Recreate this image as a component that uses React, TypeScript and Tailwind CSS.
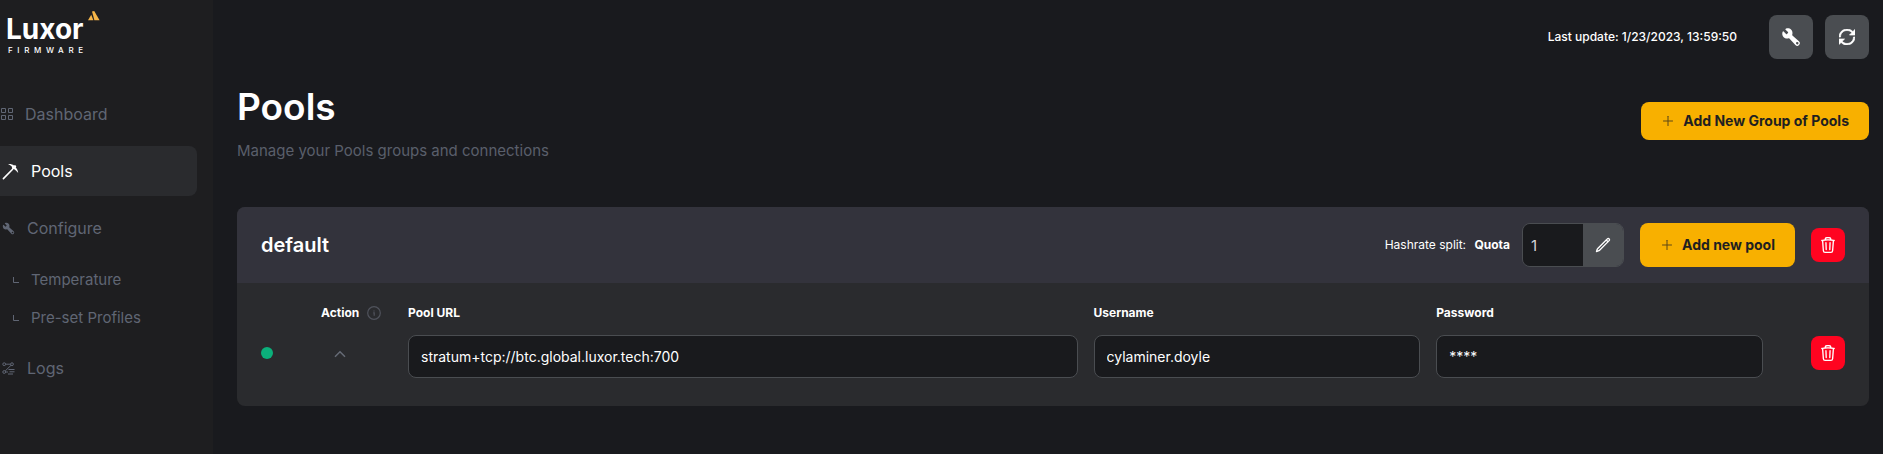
import type { ReactNode } from "react";
import { AiOutlinePlus } from "react-icons/ai";
import { HiOutlinePencil, HiOutlineTrash } from "react-icons/hi2";
import { ImLoop2 } from "react-icons/im";
import { IoBuild } from "react-icons/io5";

function Logo() {
  return (
    <a href="#home" aria-label="Luxor Firmware" className="flex items-start pl-[6px] pt-[11px]">
      <span className="flex flex-col pt-[2px]">
        <span className="text-[28px] leading-8 font-bold">Luxor</span>
        <span className="pl-[2px] text-[8px] leading-[10px] font-medium tracking-[0.58em]">FIRMWARE</span>
      </span>
      <svg width="12" height="10" viewBox="0 0 12 10" fill="#f5b548" aria-hidden="true">
        <path d="M4 0.4 L6.2 0 L11.6 9.2 L6.4 9.2 Z" />
        <path d="M3.2 3.8 L5.4 9.2 L0 9.2 Z" />
      </svg>
    </a>
  );
}

function GridIcon() {
  return (
    <svg width="14" height="14" viewBox="0 0 14 14" fill="none" stroke="currentColor" aria-hidden="true">
      <path d="M1.5 1.5h4v4h-4zM8.5 1.5h4v4h-4zM1.5 8.5h4v4h-4zM8.5 8.5h4v4h-4z" />
    </svg>
  );
}

function PickaxeIcon() {
  return (
    <svg width="17" height="17" viewBox="0 0 17 17" aria-hidden="true">
      <path d="M1.4 15.6 L10.6 6.2" stroke="currentColor" strokeWidth="1.6" strokeLinecap="round" />
      <path d="M6 1 C8.5 0.7 10.5 1.3 12 2.4 L13.1 1.9 L14.3 3.3 L13.8 4.4 C15.2 6 16 7.8 16.2 10 C14.8 8.2 13.4 6.9 11.8 6 L10.8 6.2 L9.8 5 L10.2 4.1 C9 2.8 7.6 1.8 6 1 Z" fill="currentColor" />
    </svg>
  );
}

function LogsIcon() {
  return (
    <svg width="13" height="13" viewBox="0 0 13 13" fill="none" stroke="currentColor" aria-hidden="true">
      <circle cx="2.2" cy="2.2" r="1.4" />
      <circle cx="10" cy="2.2" r="1.4" />
      <circle cx="2.2" cy="10" r="1.4" />
      <path d="M3.6 2.2h5M9 3.3L3.2 9M3.6 10h2.4M6.5 7.5h6M7.5 9.8h5M6 12h5" />
    </svg>
  );
}

function CornerIcon() {
  return (
    <svg width="6" height="6" viewBox="0 0 6 6" fill="none" stroke="currentColor" aria-hidden="true">
      <path d="M0.5 0v5.5h5.5" />
    </svg>
  );
}

function InfoIcon() {
  return (
    <svg width="14" height="14" viewBox="0 0 14 14" fill="none" stroke="currentColor" strokeWidth="1.2" className="text-[#50535c]" aria-hidden="true">
      <circle cx="7" cy="7" r="6.3" />
      <path d="M6.2 6.8h1v3M7 4.4v1.2" />
    </svg>
  );
}

function NavLink({ icon, label, className }: { icon: ReactNode; label: string; className: string }) {
  return (
    <a href={"#" + label.toLowerCase().replace(" ", "-")} className={"flex items-center text-[#606674] " + className}>
      {icon}
      {label}
    </a>
  );
}

function DeleteButton({ label }: { label: string }) {
  return (
    <button type="button" aria-label={label} className="flex size-[34px] items-center justify-center rounded-lg bg-[#ff0420]">
      <HiOutlineTrash className="size-[18px] [&_path]:stroke-[1.8]" />
    </button>
  );
}

function ToolButton({ label, children }: { label: string; children: ReactNode }) {
  return (
    <button type="button" aria-label={label} className="flex size-11 items-center justify-center rounded-lg bg-[#4a4d51]">
      {children}
    </button>
  );
}

function Field({ id, label, value, className }: { id: string; label: string; value: string; className?: string }) {
  return (
    <div className={"flex flex-col gap-[14px] " + (className ?? "")}>
      <label htmlFor={id} className="text-xs leading-4 font-bold">{label}</label>
      <input
        id={id}
        type="text"
        defaultValue={value}
        className="h-[43px] w-full rounded-lg border border-[#4a4d51] bg-[#191a1d] px-3 text-sm outline-none"
      />
    </div>
  );
}

export default function App() {
  return (
    <div className="flex min-h-screen bg-[#191a1e] font-['Inter',sans-serif] text-white">
      <aside className="w-[213px] shrink-0 bg-[#1e1e20]">
        <Logo />
        <nav className="flex flex-col pt-[34px]">
          <NavLink icon={<GridIcon />} label="Dashboard" className="h-[50px] gap-[11px] text-base" />
          <a href="#pools" aria-current="page" className="mt-[7px] mr-4 flex h-[50px] items-center gap-3 rounded-r-lg bg-[#2a2b2e] pl-[2px] text-base">
            <PickaxeIcon />
            Pools
          </a>
          <NavLink icon={<IoBuild className="size-[13px] -scale-x-100" />} label="Configure" className="mt-[7px] h-[50px] gap-3 pl-[2px] text-base" />
          <NavLink icon={<CornerIcon />} label="Temperature" className="mt-2 h-[38px] gap-3 pl-[13px] text-[15px]" />
          <NavLink icon={<CornerIcon />} label="Pre-set Profiles" className="h-[38px] gap-3 pl-[13px] text-[15px]" />
          <NavLink icon={<LogsIcon />} label="Logs" className="mt-[6px] h-[50px] gap-3 pl-[2px] text-base" />
        </nav>
      </aside>

      <main className="min-w-0 flex-1 pt-[15px] pr-[14px] pl-6">
        <div className="flex items-center justify-end gap-3">
          <p className="mr-5 text-xs font-medium">Last update: 1/23/2023, 13:59:50</p>
          <ToolButton label="Tools">
            <IoBuild className="size-5 -scale-x-100" />
          </ToolButton>
          <ToolButton label="Refresh">
            <ImLoop2 className="size-4" stroke="currentColor" strokeWidth="0.7" />
          </ToolButton>
        </div>

        <header className="mt-6 flex items-start justify-between">
          <div>
            <h1 className="text-[37px] leading-[48px] font-semibold">Pools</h1>
            <p className="mt-2 text-[15px] leading-6 text-[#5a5f6b]">Manage your Pools groups and connections</p>
          </div>
          <button type="button" className="mt-[19px] flex h-[38px] items-center gap-2 rounded-lg bg-[#f8b000] px-5 text-sm font-bold text-[#1f1f21]">
            <AiOutlinePlus className="size-[14px] opacity-70" />
            Add New Group of Pools
          </button>
        </header>

        <section className="mt-11 overflow-hidden rounded-lg bg-[#2a2b2e]">
          <div className="flex h-[76px] items-center bg-[#33333c] px-6">
            <h2 className="flex-1 text-xl font-semibold">default</h2>
            <label htmlFor="quota" className="text-xs">
              Hashrate split: <span className="ml-[5px] font-bold">Quota</span>
            </label>
            <div className="ml-3 flex h-11 overflow-hidden rounded-lg border border-[#4a4d51]">
              <input id="quota" type="text" defaultValue="1" className="w-[60px] bg-[#191a1d] pt-[3px] pl-2 text-[15px] text-[#d5d6d8] outline-none" />
              <button type="button" aria-label="Edit quota" className="flex w-10 items-center justify-center bg-[#4a4d51]">
                <HiOutlinePencil className="size-4 [&_path]:stroke-2" />
              </button>
            </div>
            <button type="button" className="mx-4 flex h-11 items-center gap-2 rounded-lg bg-[#f8b000] px-5 text-sm font-bold text-[#1f1f21]">
              <AiOutlinePlus className="size-[14px] opacity-70" />
              Add new pool
            </button>
            <DeleteButton label="Delete group" />
          </div>

          <div className="flex px-6 pt-[22px] pb-7">
            <div className="flex w-[60px] flex-col pt-[42px]">
              <span role="img" aria-label="Connected" className="size-3 rounded-full bg-[#0bb07b]" />
            </div>
            <div className="flex w-[87px] flex-col">
              <div className="flex items-center gap-2 text-xs leading-4 font-bold">
                Action
                <InfoIcon />
              </div>
              <button type="button" aria-label="Move up" className="mt-[25px] ml-[11px] flex h-4 w-4 items-center justify-center text-[#666b76]">
                <svg width="12" height="8" viewBox="0 0 12 8" fill="none" stroke="currentColor" strokeWidth="1.5" aria-hidden="true">
                  <path d="M1 6.8L6 1.8L11 6.8" />
                </svg>
              </button>
            </div>
            <div className="grid flex-1 grid-cols-4 gap-4">
              <Field id="pool-url" label="Pool URL" value="stratum+tcp://btc.global.luxor.tech:700" className="col-span-2" />
              <Field id="username" label="Username" value="cylaminer.doyle" />
              <Field id="password" label="Password" value="****" />
            </div>
            <div className="ml-12 pt-[31px]">
              <DeleteButton label="Delete pool" />
            </div>
          </div>
        </section>
      </main>
    </div>
  );
}
